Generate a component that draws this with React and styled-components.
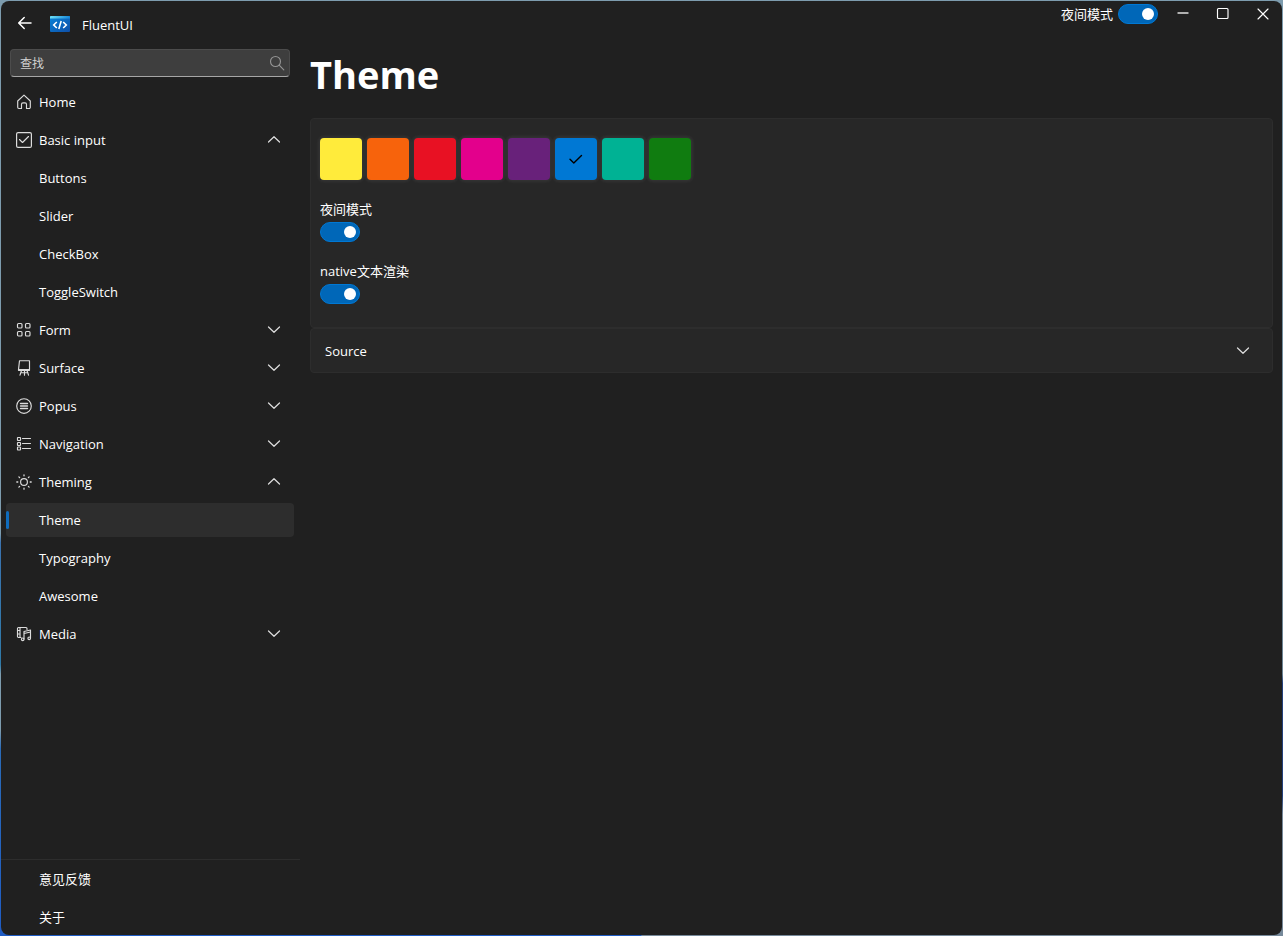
import React, { useState } from "react";
import styled, { createGlobalStyle } from "styled-components";

const GlobalStyle = createGlobalStyle`
  * { box-sizing: border-box; }
  html, body, #root { height: 100%; }
  body {
    margin: 0;
    background: #7d9cae;
    font-family: "Open Sans", "Noto Sans CJK SC", sans-serif;
    font-size: 13px;
    line-height: 18px;
    color: #fff;
  }
  button, input { font: inherit; color: inherit; }
`;

const Desktop = styled.div`
  height: 100%;
  min-height: 720px;
  padding: 1px;
  background:
    linear-gradient(180deg, #7d9cae 57%, #3a73b0 58%, #2f7aa8 71%, #7d9cae 72%, #7d9cae 78%, #2a6bb8 80%, #1f5cc4 100%) left / 50% 100% no-repeat,
    linear-gradient(180deg, #7d9cae 0%, #6c8494 72%, #23407c 73%, #23407c 85%, #76899a 87%) right / 50% 100% no-repeat;
`;

const Window = styled.div`
  height: 100%;
  display: flex;
  overflow: hidden;
  border-radius: 8px;
  background: #202020;
`;

const Sidebar = styled.aside`
  width: 299px;
  flex: none;
  display: flex;
  flex-direction: column;
`;

const TitleBar = styled.header`
  height: 48px;
  display: flex;
  align-items: center;
  padding: 0 9px 2px;
`;

const IconButton = styled.button`
  width: ${(p) => p.$width || 30}px;
  height: 28px;
  padding: 0 0 2px;
  border: 0;
  background: none;
  display: flex;
  align-items: center;
  justify-content: center;
`;

const Logo = styled.svg`
  margin: 0 12px 0 10px;
`;

const AppName = styled.span`
  font-size: 13px;
  padding-top: 2px;
`;

const SearchBox = styled.label`
  height: 28px;
  margin: 0 10px 6px 9px;
  display: flex;
  align-items: center;
  padding: 0 4px 0 9px;
  border: 1px solid #4c4c4c;
  border-bottom-color: #a6a6a6;
  border-radius: 4px;
  background: #3e3e3e;
`;

const SearchInput = styled.input`
  flex: 1;
  min-width: 0;
  padding: 2px 0 0;
  border: 0;
  outline: 0;
  background: none;
  font-size: 12px;
  &::placeholder { color: #d0d0d0; opacity: 1; }
`;

const Nav = styled.nav`
  flex: 1;
  display: flex;
  flex-direction: column;
  gap: 4px;
  padding: 2px 6px 1px 5px;
`;

const FooterNav = styled(Nav)`
  flex: none;
  border-top: 1px solid #2d2d2d;
`;

const Item = styled.a`
  height: 34px;
  display: flex;
  align-items: center;
  padding: 0 12px 0 0;
  border-radius: 4px;
  color: #fff;
  text-decoration: none;
  background: ${(p) => (p.$selected ? "#2d2d2d" : "transparent")};
  &::before {
    content: "";
    width: 3px;
    height: 18px;
    border-radius: 2px;
    background: ${(p) => (p.$selected ? "#0f6cbd" : "transparent")};
  }
`;

const ItemIcon = styled.span`
  width: 30px;
  display: flex;
  justify-content: center;
`;

const ItemLabel = styled.span`
  flex: 1;
  text-align: left;
`;

const GroupButton = styled(Item)`
  width: 100%;
  border: 0;
`;

const Main = styled.main`
  flex: 1;
  min-width: 0;
  padding-right: 9px;
`;

const WindowControls = styled.div`
  height: 26px;
  display: flex;
  justify-content: flex-end;
  align-items: center;
  margin-right: -10px;
`;

const ToggleRow = styled.label`
  display: flex;
  align-items: center;
  gap: 5px;
  margin-right: 5px;
`;

const ToggleStack = styled.label`
  display: flex;
  flex-direction: column;
  align-items: flex-start;
  gap: 4px;
`;

const Switch = styled.input`
  appearance: none;
  flex: none;
  width: 40px;
  height: 20px;
  margin: 0;
  padding: 3px;
  display: flex;
  justify-content: flex-end;
  border: 1px solid #0078d4;
  border-radius: 10px;
  background: #0067b8;
  &::before {
    content: "";
    width: 12px;
    height: 12px;
    border-radius: 50%;
    background: #fff;
  }
  &:not(:checked) {
    justify-content: flex-start;
    border-color: #a0a0a0;
    background: #323232;
  }
`;

const Title = styled.h1`
  margin: 20px 0 17px 10px;
  font-size: 38px;
  line-height: 54px;
  font-weight: 700;
`;

const Panel = styled.section`
  margin-left: 10px;
  border: 1px solid #2d2d2d;
  border-radius: 4px;
  background: #272727;
`;

const Settings = styled(Panel)`
  display: flex;
  flex-direction: column;
  gap: 20px;
  padding: 19px 9px 23px;
`;

const Swatches = styled.div`
  display: flex;
  gap: 5px;
`;

const Swatch = styled.button`
  width: 42px;
  height: 42px;
  padding: 0;
  display: flex;
  align-items: center;
  justify-content: center;
  border: 0;
  border-radius: 4px;
  background: ${(p) => p.$color};
  box-shadow: 0 0 3px 2px rgba(255, 255, 255, 0.06);
`;

const Expander = styled.button`
  width: 100%;
  height: 43px;
  display: flex;
  align-items: center;
  justify-content: space-between;
  padding: 0 21px 0 14px;
  border: 0;
  background: none;
`;

const Svg = ({ size = 16, children, color = "#dcdcdc", width = 1.15 }) => (
  <svg width={size} height={size} viewBox={`0 0 ${size} ${size}`} fill="none" stroke={color} strokeWidth={width} strokeLinecap="round" strokeLinejoin="round" aria-hidden="true">
    {children}
  </svg>
);

const Chevron = ({ up }) => (
  <Svg>
    <path d={up ? "M2.500 10 8 4.700l5.500 5.300" : "M2.500 5 8 10.300l5.500-5.300"} strokeWidth="1.250" />
  </Svg>
);

const icons = {
  home: <Svg><path d="M1.700 7 8 1.200 14.300 7v6.300a1.200 1.200 0 0 1-1.200 1.200h-2.600v-4.200a1.500 1.500 0 0 0-1.500-1.500H7a1.500 1.500 0 0 0-1.500 1.500v4.200H2.900a1.200 1.200 0 0 1-1.200-1.200z" /></Svg>,
  check: <Svg><rect x=".6" y=".6" width="14.800" height="14.800" rx="1.500" strokeWidth="1.200" /><path d="m3.500 7.500 3 3 6-6" /></Svg>,
  grid: <Svg><rect x="1.500" y="1.500" width="4.500" height="4.500" rx="1" /><rect x="9.500" y="1.500" width="4.500" height="4.500" rx="1" /><rect x="1.500" y="9.500" width="4.500" height="4.500" rx="1" /><rect x="9.500" y="9.500" width="4.500" height="4.500" rx="1" /></Svg>,
  surface: <Svg><path d="M3.500.7h10v8.800H2.500zM2.500 9.500v.8h11v-.8M5.500 10.500 4 15.200M8.500 10.500v4.700M11 10.500l1.500 4.700M5 12.700h7" /></Svg>,
  popup: <Svg><circle cx="8" cy="8" r="7.300" /><path d="M4.500 5.500h7M4.500 8h7M4.500 10.500h7" strokeWidth="1.400" /></Svg>,
  list: <Svg><rect x="1.500" y="1.500" width="3" height="3" rx=".5" /><rect x="1.500" y="6.500" width="3" height="3" rx=".5" /><rect x="1.500" y="11" width="3" height="3" rx=".5" /><path d="M6.500 2.500h8M6.500 7.500h8M6.500 12.500h8" /></Svg>,
  sun: <Svg><circle cx="8" cy="8" r="3.400" /><path d="M8 .8v1M8 14.200v1M.8 8h1M14.200 8h1M2.900 2.900l.7.7M12.400 12.400l.7.7M2.900 13.100l.7-.7M12.400 3.600l.7-.7" strokeWidth="1.300" /></Svg>,
  media: <Svg><path d="M5 11.500H2.500a1 1 0 0 1-1-1v-8a1 1 0 0 1 1-1h7.500a1 1 0 0 1 1 1v1M4 1.500v10M1.500 4.500H4M1.500 8H4M8 13V5.500L14.500 4v8M8 7.500 14.500 6" /><circle cx="6.700" cy="13.300" r="1.300" /><circle cx="13.200" cy="12.300" r="1.300" /></Svg>,
};

const entries = [
  { text: "Home", icon: "home" },
  { text: "Basic input", icon: "check", children: ["Buttons", "Slider", "CheckBox", "ToggleSwitch"] },
  { text: "Form", icon: "grid", children: [] },
  { text: "Surface", icon: "surface", children: [] },
  { text: "Popus", icon: "popup", children: [] },
  { text: "Navigation", icon: "list", children: [] },
  { text: "Theming", icon: "sun", children: ["Theme", "Typography", "Awesome"] },
  { text: "Media", icon: "media", children: [] },
];

const colors = [
  ["Yellow", "#ffeb3b"],
  ["Orange", "#f7630c"],
  ["Red", "#e81123"],
  ["Magenta", "#e3008c"],
  ["Purple", "#68217a"],
  ["Blue", "#0078d4"],
  ["Teal", "#00b294"],
  ["Green", "#107c10"],
];

function NavLink({ text, icon, selected, onSelect }) {
  return (
    <Item href="#" $selected={selected} aria-current={selected ? "page" : undefined} onClick={(e) => { e.preventDefault(); onSelect(text); }}>
      <ItemIcon>{icon && icons[icon]}</ItemIcon>
      <ItemLabel>{text}</ItemLabel>
    </Item>
  );
}

export default function App() {
  const [page, setPage] = useState("Theme");
  const [open, setOpen] = useState({ "Basic input": true, Theming: true });
  const [dark, setDark] = useState(true);
  const [native, setNative] = useState(true);
  const [accent, setAccent] = useState("Blue");

  return (
    <Desktop>
      <GlobalStyle />
      <Window>
        <Sidebar>
          <TitleBar>
            <IconButton aria-label="Back">
              <Svg color="#fff" width={1.5}><path d="M14 8H2M7.200 2.500 1.700 8l5.500 5.500" /></Svg>
            </IconButton>
            <Logo width="20" height="16" viewBox="0 0 20 16" aria-hidden="true">
              <defs>
                <linearGradient id="logo" x1="0" y1="0" x2="1" y2="1">
                  <stop offset="0" stopColor="#0883d9" />
                  <stop offset="1" stopColor="#0f4fa8" />
                </linearGradient>
                <linearGradient id="logoTop">
                  <stop offset="0" stopColor="#6fe0f5" />
                  <stop offset="1" stopColor="#1686d8" />
                </linearGradient>
              </defs>
              <rect width="20" height="16" rx="1" fill="url(#logo)" />
              <path d="M1 0h18a1 1 0 0 1 1 1v1.500H0V1a1 1 0 0 1 1-1z" fill="url(#logoTop)" />
              <path d="M6.800 6 3.700 9l3.100 3M13.200 6l3.100 3-3.100 3M11.200 5 8.800 13" fill="none" stroke="#fff" strokeWidth="1.600" />
            </Logo>
            <AppName>FluentUI</AppName>
          </TitleBar>
          <SearchBox>
            <SearchInput placeholder="查找" aria-label="查找" />
            <Svg color="#949494"><circle cx="6.500" cy="6.500" r="5" /><path d="m10.200 10.200 4.600 4.600" /></Svg>
          </SearchBox>
          <Nav>
            {entries.map(({ text, icon, children }) =>
              children ? (
                <React.Fragment key={text}>
                  <GroupButton as="button" aria-expanded={!!open[text]} onClick={() => setOpen({ ...open, [text]: !open[text] })}>
                    <ItemIcon>{icons[icon]}</ItemIcon>
                    <ItemLabel>{text}</ItemLabel>
                    <Chevron up={open[text]} />
                  </GroupButton>
                  {open[text] && children.map((child) => (
                    <NavLink key={child} text={child} selected={page === child} onSelect={setPage} />
                  ))}
                </React.Fragment>
              ) : (
                <NavLink key={text} text={text} icon={icon} selected={page === text} onSelect={setPage} />
              )
            )}
          </Nav>
          <FooterNav>
            <NavLink text="意见反馈" onSelect={setPage} />
            <NavLink text="关于" onSelect={setPage} />
          </FooterNav>
        </Sidebar>
        <Main>
          <WindowControls>
            <ToggleRow>
              夜间模式
              <Switch type="checkbox" checked={dark} onChange={() => setDark(!dark)} />
            </ToggleRow>
            <IconButton $width={40} aria-label="Minimize"><Svg color="#e0e0e0" width={1.4}><path d="M3 8h10" /></Svg></IconButton>
            <IconButton $width={40} aria-label="Maximize"><Svg color="#fff"><rect x="2.500" y="3.500" width="10.500" height="10" rx="1" /></Svg></IconButton>
            <IconButton $width={40} aria-label="Close"><Svg color="#fff"><path d="m3 4 10 10M13 4 3 14" /></Svg></IconButton>
          </WindowControls>
          <Title>Theme</Title>
          <Settings>
            <Swatches>
              {colors.map(([name, color]) => (
                <Swatch key={name} $color={color} aria-label={name} aria-pressed={accent === name} onClick={() => setAccent(name)}>
                  {accent === name && <Svg color="#000" width={1.4}><path d="m2 8.300 3.800 3.700 7.700-7.500" /></Svg>}
                </Swatch>
              ))}
            </Swatches>
            <ToggleStack>
              夜间模式
              <Switch type="checkbox" checked={dark} onChange={() => setDark(!dark)} />
            </ToggleStack>
            <ToggleStack>
              native文本渲染
              <Switch type="checkbox" checked={native} onChange={() => setNative(!native)} />
            </ToggleStack>
          </Settings>
          <Panel>
            <Expander aria-expanded="false">Source<Chevron /></Expander>
          </Panel>
        </Main>
      </Window>
    </Desktop>
  );
}
